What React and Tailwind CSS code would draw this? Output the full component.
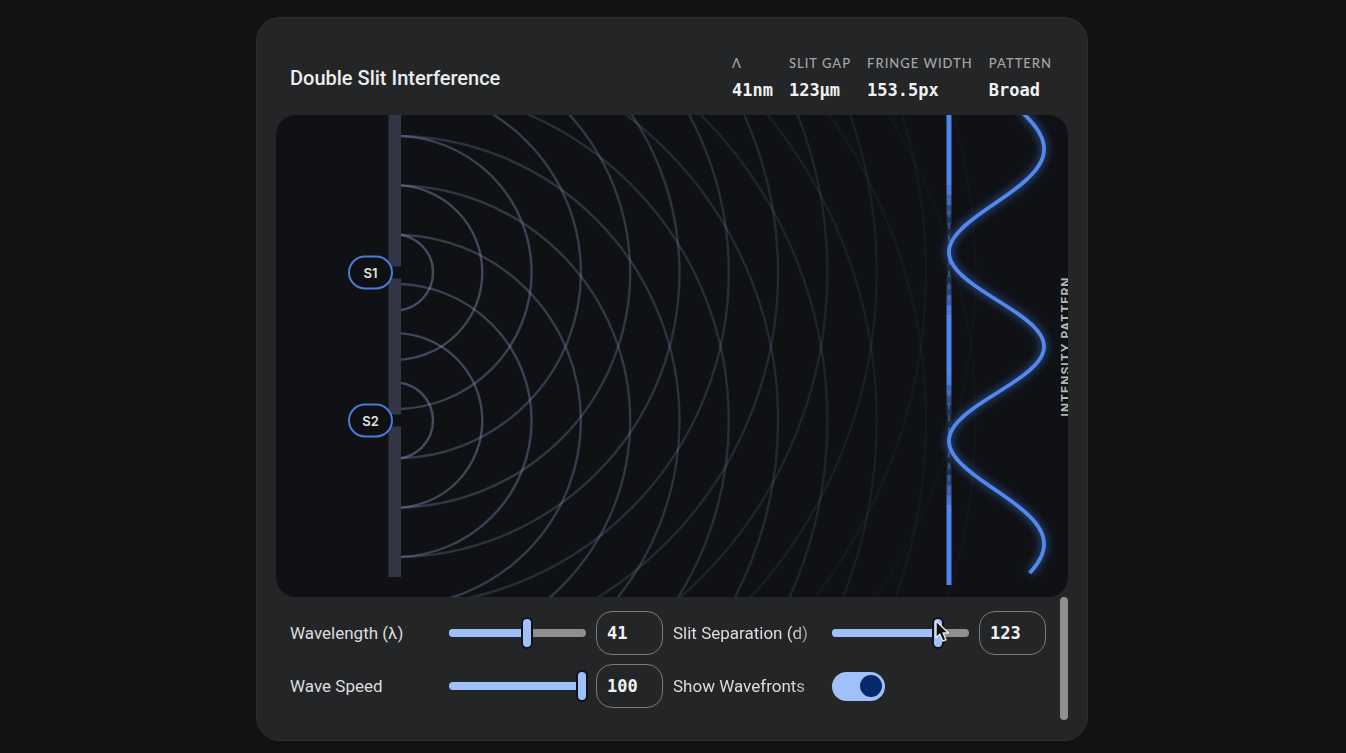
import React, { useState } from 'react'

const SLIT_X = 119
const SCREEN_X = 673
const CENTER_Y = 231.5
const SLIT_GAP = 148
const WIDTH = 792
const HEIGHT = 482

// intensity on the screen, 0..1
function intensity(y) {
  const dy = y - CENTER_Y
  const L = SCREEN_X - SLIT_X
  const phase = (9.355 * dy) / Math.sqrt(dy * dy + L * L)
  return Math.cos(phase) ** 2
}

function curvePath() {
  let d = ''
  for (let y = -4; y <= 458; y += 2) {
    d += `${d ? 'L' : 'M'}${(SCREEN_X + 95 * intensity(y)).toFixed(2)} ${y}`
  }
  return d
}

const bands = Array.from({ length: 47 }, (_, i) => i * 10)
const rings = Array.from({ length: 12 }, (_, i) => 38 + i * 49.3)

function SlitTag({ y, label }) {
  return (
    <g>
      <rect x="73" y={y - 16} width="43" height="32" rx="16" fill="#0f1014" stroke="#4a7ad8" strokeWidth="2" />
      <text x="94.5" y={y + 5} textAnchor="middle" fontSize="13" fill="#e3e3e3" className="font-semibold">
        {label}
      </text>
    </g>
  )
}

function Simulation({ showWavefronts }) {
  const y1 = CENTER_Y - SLIT_GAP / 2
  const y2 = CENTER_Y + SLIT_GAP / 2

  return (
    <div className="overflow-hidden rounded-[20px] bg-[#0f1115]">
      <svg viewBox={`0 0 ${WIDTH} ${HEIGHT}`} className="block h-auto w-full font-['Inter',sans-serif]">
        <defs>
          <clipPath id="right-of-wall">
            <rect x="125" y="0" width="667" height={HEIGHT} />
          </clipPath>
          <filter id="glow" x="-30%" y="-10%" width="160%" height="120%">
            <feGaussianBlur stdDeviation="4" />
          </filter>
        </defs>

        {showWavefronts && (
          <g clipPath="url(#right-of-wall)" fill="none" stroke="#8594b8" strokeWidth="2.4">
            {rings.map((r) => (
              <g key={r} strokeOpacity={Math.max(0.03, 0.48 * (1 - r / 610))}>
                <circle cx={SLIT_X} cy={y1} r={r} />
                <circle cx={SLIT_X} cy={y2} r={r} />
              </g>
            ))}
          </g>
        )}

        <g fill="#333546">
          <rect x="112.5" y="0" width="12.5" height={y1 - 6} />
          <rect x="112.5" y={y1 + 6} width="12.5" height={SLIT_GAP - 12} />
          <rect x="112.5" y={y2 + 6} width="12.5" height={462 - y2 - 6} />
        </g>
        <SlitTag y={y1} label="S1" />
        <SlitTag y={y2} label="S2" />

        <line x1={SCREEN_X} y1="0" x2={SCREEN_X} y2="462" stroke="#3b3f4e" strokeWidth="2" strokeDasharray="6 6" />
        {bands.map((y) => (
          <rect key={y} x="670.5" y={y} width="5" height="10" fill="#4f86ec" fillOpacity={Math.min(1, intensity(y + 5) * 1.3)} />
        ))}

        <path d={curvePath()} fill="none" stroke="#3f76e4" strokeWidth="5" strokeOpacity="0.7" filter="url(#glow)" />
        <path d={curvePath()} fill="none" stroke="#5388ec" strokeWidth="3.8" />

        <text
          transform="translate(794 231.5) rotate(-90)"
          textAnchor="middle"
          fontSize="12"
          letterSpacing="1"
          fill="#b4b5b7"
          className="font-bold"
        >
          INTENSITY PATTERN
        </text>
      </svg>
    </div>
  )
}

function Stat({ label, value }) {
  return (
    <div>
      <dt className="font-['Lato',sans-serif] text-[13px] leading-[18px] font-medium tracking-[1px] text-[#a5a6a8] uppercase">{label}</dt>
      <dd className="mt-[6px] font-['DejaVu_Sans_Mono',monospace] text-[17px] leading-6 font-bold text-[#f1f1f1]">{value}</dd>
    </div>
  )
}

function Slider({ id, value, min, max, onChange, children }) {
  const ratio = (value - min) / (max - min)

  return (
    <div className="relative flex h-9 items-center">
      <div className="h-2 w-full overflow-hidden rounded-full bg-[#8f8f8f]">
        <div className="h-full bg-[#a0c0fa]" style={{ width: `${ratio * 100}%` }} />
      </div>
      <input
        id={id}
        type="range"
        min={min}
        max={max}
        value={value}
        onChange={(e) => onChange(Number(e.target.value))}
        className="absolute inset-0 h-9 w-full cursor-default appearance-none bg-transparent outline-none [&::-webkit-slider-thumb]:h-7 [&::-webkit-slider-thumb]:w-2 [&::-webkit-slider-thumb]:appearance-none [&::-webkit-slider-thumb]:rounded-full [&::-webkit-slider-thumb]:bg-[#a0c0fa] [&::-webkit-slider-thumb]:shadow-[0_0_0_2px_#111318]"
      />
      {children}
    </div>
  )
}

function NumberBox({ label, value, onChange }) {
  return (
    <input
      type="text"
      inputMode="numeric"
      aria-label={label}
      value={value}
      onChange={(e) => onChange(Number(e.target.value) || 0)}
      className="h-11 w-full rounded-2xl border border-[#77787a] bg-transparent px-[10px] font-['DejaVu_Sans_Mono',monospace] text-[17px] font-bold text-[#f1f1f1] outline-none"
    />
  )
}

function Pointer() {
  return (
    <svg viewBox="0 0 14 22" className="pointer-events-none absolute top-1 left-[102px] h-6 w-4">
      <path
        d="M1.5 1.5V17.2L5 13.9L7.7 20.2L10.6 19L8 12.8H12.8Z"
        fill="#111"
        stroke="#e8e8e8"
        strokeWidth="1.3"
        strokeLinejoin="round"
      />
    </svg>
  )
}

const labelClass = 'overflow-hidden whitespace-nowrap text-[17px] leading-6 text-[#dcdddf]'
const fadeClass = '[mask-image:linear-gradient(to_right,black_80%,transparent_105%)]'

function App() {
  const [wavelength, setWavelength] = useState(41)
  const [separation, setSeparation] = useState(123)
  const [speed, setSpeed] = useState(100)
  const [showWavefronts, setShowWavefronts] = useState(true)

  return (
    <div className="min-h-screen bg-[#121212] pt-[17px] pr-[18px] pb-3 pl-4 font-['Roboto',sans-serif]">
      <main className="mx-auto max-w-[832px] rounded-3xl border border-[#2d2e30] bg-[#242527] px-[19px] pb-5">
        <header className="flex items-center justify-between pt-9 pr-4 pb-[13px] pl-[14px]">
          <h1 className="text-[20px] leading-7 font-medium text-[#ececec]">Double Slit Interference</h1>
          <dl className="flex gap-4">
            <Stat label="λ" value={`${wavelength}nm`} />
            <Stat label="Slit gap" value={`${separation}μm`} />
            <Stat label="Fringe width" value="153.5px" />
            <Stat label="Pattern" value="Broad" />
          </dl>
        </header>

        <Simulation showWavefronts={showWavefronts} />

        <section className="flex justify-between">
          <div className="grid flex-1 grid-cols-[149px_1fr_67px_149px_1fr_67px] items-center gap-x-[10px] gap-y-[9px] pt-[14px] pr-[14px] pb-3 pl-[14px]">
            <label htmlFor="wavelength" className={labelClass}>Wavelength (λ)</label>
            <Slider id="wavelength" value={wavelength} min={0} max={71} onChange={setWavelength} />
            <NumberBox label="Wavelength value" value={wavelength} onChange={setWavelength} />

            <label htmlFor="separation" className={`${labelClass} ${fadeClass}`}>Slit Separation (d)</label>
            <Slider id="separation" value={separation} min={20} max={150} onChange={setSeparation}>
              <Pointer />
            </Slider>
            <NumberBox label="Slit separation value" value={separation} onChange={setSeparation} />

            <label htmlFor="speed" className={labelClass}>Wave Speed</label>
            <Slider id="speed" value={speed} min={0} max={100} onChange={setSpeed} />
            <NumberBox label="Wave speed value" value={speed} onChange={setSpeed} />

            <label htmlFor="wavefronts" className={`${labelClass} ${fadeClass}`}>Show Wavefronts</label>
            <input
              id="wavefronts"
              type="checkbox"
              role="switch"
              checked={showWavefronts}
              onChange={(e) => setShowWavefronts(e.target.checked)}
              className="flex h-[29px] w-[53px] appearance-none items-center rounded-full bg-[#8f8f8f] px-[3px] before:size-[22px] before:rounded-full before:bg-[#07296b] checked:justify-end checked:bg-[#a0c0fa]"
            />
          </div>
          <div className="h-[123px] w-2 rounded-full bg-[#8f8f8f]" />
        </section>
      </main>
    </div>
  )
}

export default App
